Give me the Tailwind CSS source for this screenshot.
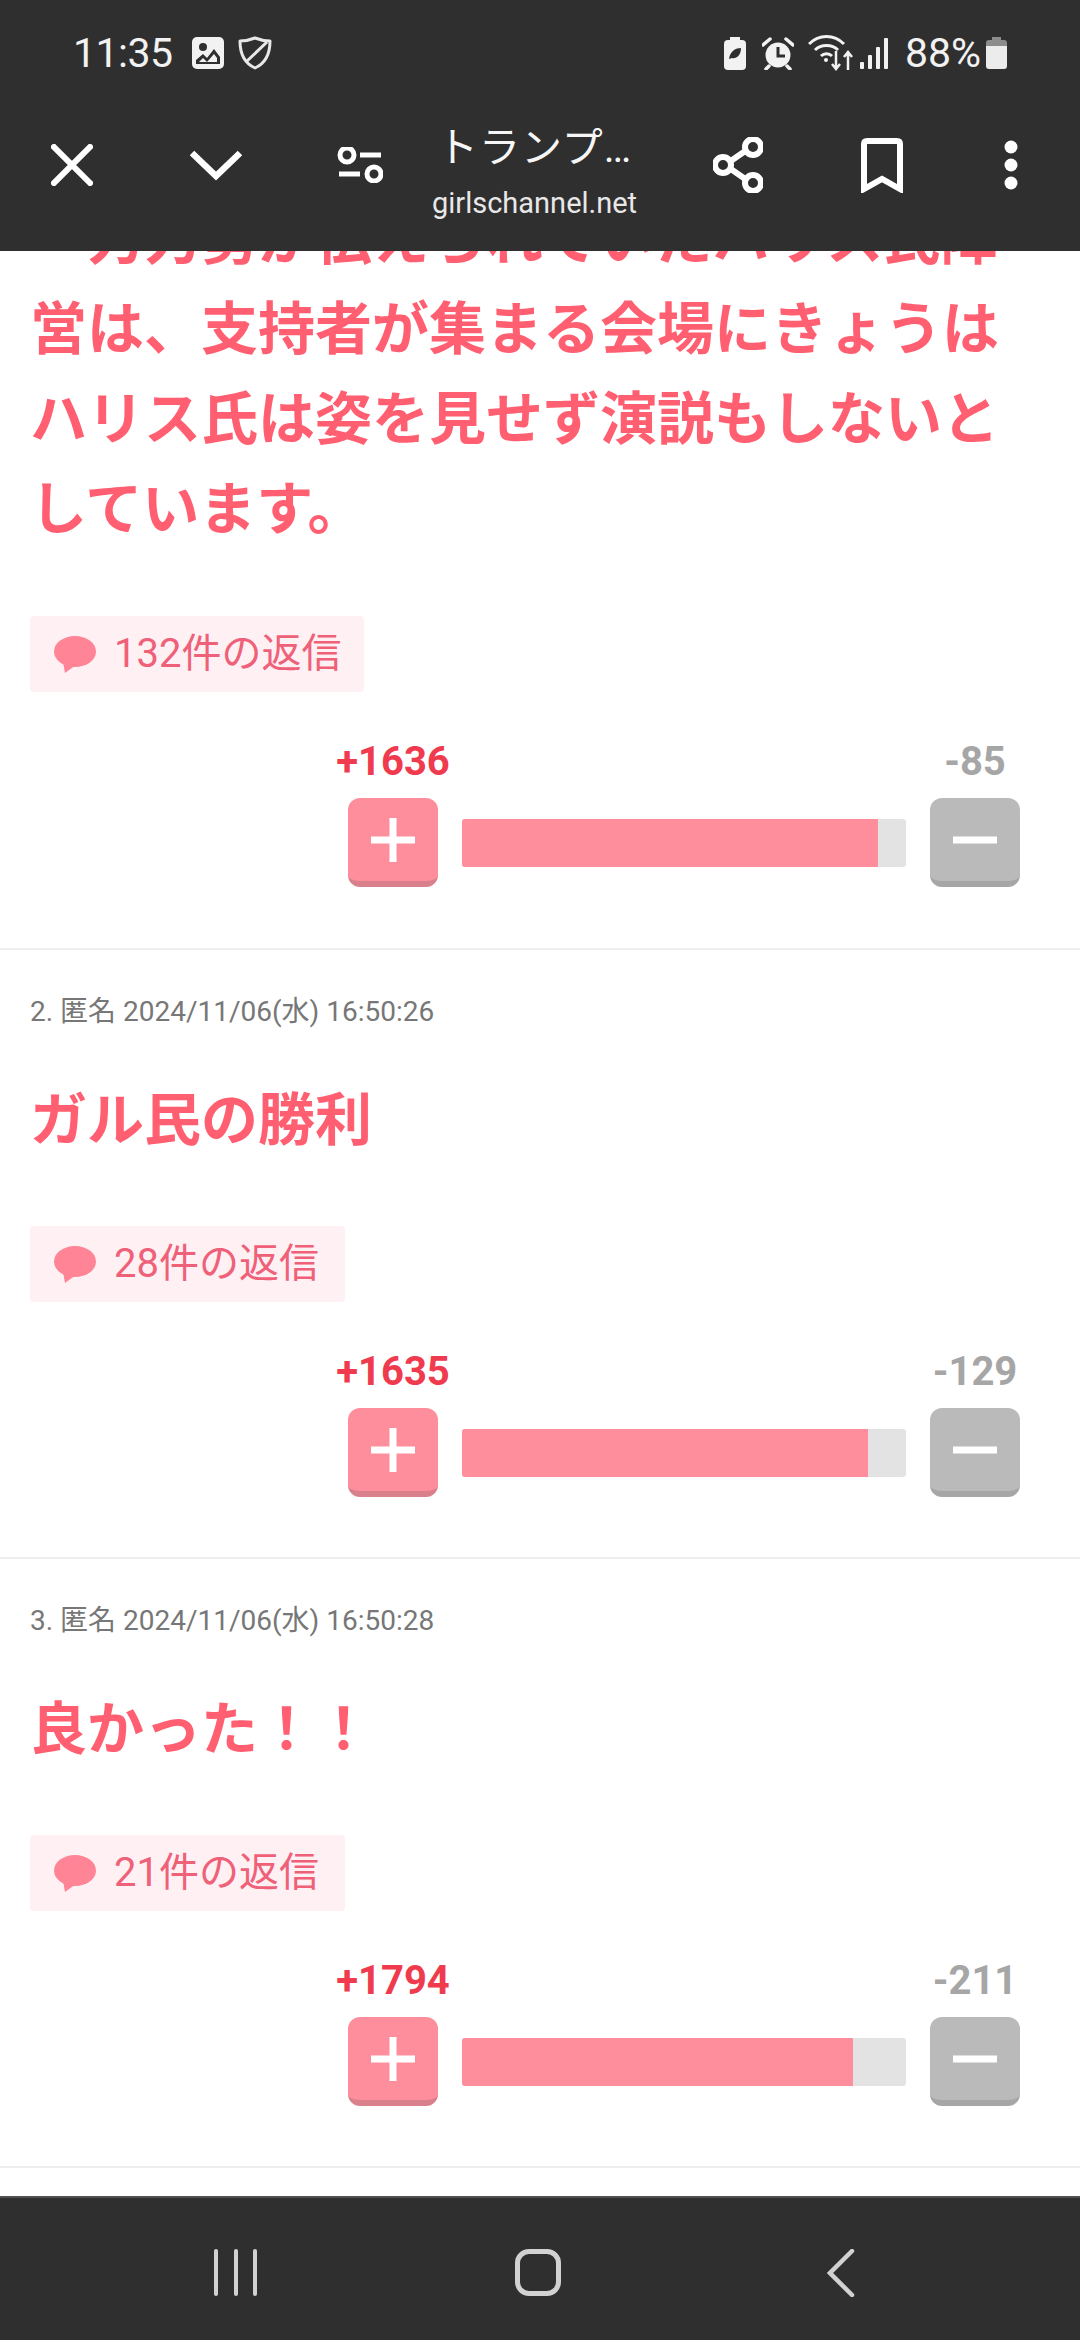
<!DOCTYPE html>
<html lang="ja">
<head>
<meta charset="utf-8">
<script src="https://cdn.jsdelivr.net/npm/@tailwindcss/browser@4"></script>
</head>
<body class="m-0">
<div class="w-[1080px] h-[2340px] flex flex-col overflow-hidden bg-white font-['Roboto','Noto_Sans_CJK_JP',sans-serif]">

  <header class="h-[251px] shrink-0 bg-[#2f2f2f] text-white relative z-10">
    <div class="h-[106px] flex items-center pl-[73px] pr-[73px]">
      <span class="text-[41px] leading-none tracking-[-0.5px] text-[#f2f2f2]">11:35</span>
      <svg class="ml-[19px]" width="32" height="32" viewBox="0 0 32 32"><rect width="32" height="32" rx="5" fill="#f2f2f2"/><circle cx="11" cy="10" r="4" fill="#2f2f2f"/><path d="M4 27 L4 23 L11 17 L15 21 L22 12 L28 20 L28 27 Z" fill="#2f2f2f"/><path d="M7 25 L11 21 L15 25 L22 17 L25 21 L25 25 Z" fill="#f2f2f2"/></svg>
      <svg class="ml-[14px]" width="34" height="34" viewBox="0 0 34 34" fill="none" stroke="#e8e8e8" stroke-width="3"><path d="M17 2 C22 4 27 5 32 5 C32 18 28 27 17 32 C6 27 2 18 2 5 C7 5 12 4 17 2 Z" stroke-linejoin="round"/><path d="M8 26 L29 6"/></svg>
      <div class="ml-auto flex items-center">
        <svg width="22" height="33" viewBox="0 0 22 33"><rect x="6" y="0" width="10" height="4" fill="#f2f2f2"/><rect y="3" width="22" height="30" rx="4" fill="#f2f2f2"/><path d="M5 22 C6 14 12 11 17 11 C17 19 12 22 8 21 Z" fill="#2f2f2f"/></svg>
        <svg class="ml-[16px]" width="32" height="33" viewBox="0 0 32 33"><circle cx="16" cy="18" r="12.5" fill="#f2f2f2"/><path d="M1 8 L8 2 M31 8 L24 2 M7 29 L4 32 M25 29 L28 32" stroke="#f2f2f2" stroke-width="3.5" stroke-linecap="round"/><path d="M16 10 V19 H23" fill="none" stroke="#2f2f2f" stroke-width="3"/></svg>
        <svg class="ml-[14px]" width="46" height="36" viewBox="0 0 46 36" fill="none" stroke="#f2f2f2" stroke-width="3"><path d="M1 9 C11 -1 26 -1 36 9"/><path d="M7 15 C13 9 24 9 30 15"/><path d="M13 21 C16 18 21 18 24 21"/><circle cx="18" cy="25" r="2" fill="#f2f2f2" stroke="none"/><path d="M28 16 V33 M24 29 L28 34 L32 29" stroke-width="2.5"/><path d="M40 35 V18 M36 22 L40 17 L44 22" stroke-width="2.5"/></svg>
        <svg class="ml-[6px]" width="29" height="32" viewBox="0 0 29 32" fill="#f2f2f2"><rect x="0" y="25" width="4" height="7" rx="1"/><rect x="8" y="18" width="4" height="14" rx="1" /><rect x="16" y="10" width="4" height="22" rx="1"/><rect x="24" y="1" width="4" height="31" rx="1"/></svg>
        <span class="ml-[16px] text-[41px] leading-none text-[#f2f2f2]">88%</span>
        <svg class="ml-[5px]" width="21" height="32" viewBox="0 0 21 32"><path d="M6 0 H15 V3 H18 Q21 3 21 6 V9 H0 V6 Q0 3 3 3 H6 Z" fill="#8c8c8c"/><path d="M0 9 H21 V29 Q21 32 18 32 H3 Q0 32 0 29 Z" fill="#ececec"/></svg>
      </div>
    </div>
    <div class="h-[118px] flex items-center">
      <button class="w-[144px] flex justify-center"><svg width="42" height="42" viewBox="0 0 42 42" stroke="#fff" stroke-width="6" stroke-linecap="square"><path d="M3 3 L39 39 M39 3 L3 39"/></svg></button>
      <button class="w-[144px] flex justify-center"><svg width="52" height="32" viewBox="0 0 52 32" fill="none" stroke="#fff" stroke-width="6.5"><path d="M2 4 L26 27 L50 4"/></svg></button>
      <button class="w-[144px] flex justify-center"><svg width="46" height="36" viewBox="0 0 46 36" fill="none" stroke="#fff" stroke-width="5"><circle cx="10" cy="8" r="7"/><path d="M23 8 H44"/><path d="M2 27 H23"/><circle cx="37" cy="27" r="7"/></svg></button>
      <div class="w-[234px] mt-[12px]">
        <div class="text-[41px] leading-[56px] pl-[5px] tracking-[1px] text-[#f6f6f6] whitespace-nowrap">トランプ…</div>
        <div class="text-[29px] leading-[40px] mt-[7px] text-[#e8e8e8] whitespace-nowrap">girlschannel.net</div>
      </div>
      <button class="w-[144px] flex justify-center"><svg width="50" height="56" viewBox="0 0 50 56" fill="none" stroke="#fff" stroke-width="6"><path d="M38 10 L12 28 L38 46"/><circle cx="40" cy="10" r="8" fill="#2f2f2f"/><circle cx="10" cy="28" r="8" fill="#2f2f2f"/><circle cx="40" cy="46" r="8" fill="#2f2f2f"/></svg></button>
      <button class="w-[144px] flex justify-center"><svg width="42" height="55" viewBox="0 0 42 55" fill="none" stroke="#fff" stroke-width="6"><path d="M3 51 V6 Q3 3 6 3 H36 Q39 3 39 6 V51 L21 41 Z"/></svg></button>
      <button class="w-[114px] flex justify-center"><svg width="14" height="50" viewBox="0 0 14 50" fill="#fff"><circle cx="7" cy="7" r="6.5"/><circle cx="7" cy="25" r="6.5"/><circle cx="7" cy="43" r="6.5"/></svg></button>
    </div>
  </header>

  <main class="flex-1 overflow-hidden">
    <article class="mt-[-56px] border-b-2 border-[#eeeeee] pb-[61px] px-[30px]">
      <p class="w-[1000px] text-[57px] leading-[90px] font-bold text-[#ff5f70]">　力力勢が伝えられていたハリス氏陣営は、支持者が集まる会場にきょうはハリス氏は姿を見せず演説もしないとしています。</p>
      <div class="mt-[61px] inline-flex items-center h-[76px] pl-[24px] pr-[23px] rounded-[4px] bg-[#fff0f3] text-[#ef6079] text-[40px] leading-none">
        <svg class="mr-[18px]" width="42" height="37" viewBox="0 0 42 37" fill="#ff8596"><ellipse cx="21" cy="15.5" rx="21" ry="15.5"/><path d="M9 26 L11 37 L22 29 Z"/></svg>132件の返信
      </div>
      <div class="mt-[50px] ml-auto mr-[30px] w-[672px]">
        <div class="flex justify-between text-[40px] leading-[40px] font-bold">
          <span class="w-[90px] flex justify-center whitespace-nowrap text-[#f03a4e]">+1636</span>
          <span class="w-[90px] flex justify-center whitespace-nowrap text-[#a6a6a6]">-85</span>
        </div>
        <div class="mt-[16px] flex items-start">
          <button class="w-[90px] h-[89px] rounded-[12px] bg-[#ff8e9c] border-b-[6px] border-[#d9808c] flex items-center justify-center"><svg width="44" height="44" viewBox="0 0 44 44" fill="#fff"><rect x="18.500" width="7" height="44"/><rect y="18.500" width="44" height="7"/></svg></button>
          <div class="mt-[21px] mx-[24px] flex-1 h-[48px] rounded-[3px] overflow-hidden bg-[#e3e3e3]"><div class="h-full w-[416px] bg-[#ff8e9c]"></div></div>
          <button class="w-[90px] h-[89px] rounded-[12px] bg-[#bababa] border-b-[6px] border-[#a6a6a6] flex items-center justify-center"><svg width="44" height="44" viewBox="0 0 44 44" fill="#fff"><rect y="18.500" width="44" height="7"/></svg></button>
        </div>
      </div>
    </article>

    <article class="border-b-2 border-[#eeeeee] pt-[43px] pb-[60px] px-[30px]">
      <div class="text-[28px] leading-[38px] text-[#777777]">2. 匿名 2024/11/06(水) 16:50:26</div>
      <p class="mt-[45px] text-[57px] leading-[90px] font-bold text-[#ff5f70]">ガル民の勝利</p>
      <div class="mt-[60px] inline-flex items-center h-[76px] pl-[24px] pr-[26px] rounded-[4px] bg-[#fff0f3] text-[#ef6079] text-[40px] leading-none">
        <svg class="mr-[18px]" width="42" height="37" viewBox="0 0 42 37" fill="#ff8596"><ellipse cx="21" cy="15.5" rx="21" ry="15.5"/><path d="M9 26 L11 37 L22 29 Z"/></svg>28件の返信
      </div>
      <div class="mt-[50px] ml-auto mr-[30px] w-[672px]">
        <div class="flex justify-between text-[40px] leading-[40px] font-bold">
          <span class="w-[90px] flex justify-center whitespace-nowrap text-[#f03a4e]">+1635</span>
          <span class="w-[90px] flex justify-center whitespace-nowrap text-[#a6a6a6]">-129</span>
        </div>
        <div class="mt-[16px] flex items-start">
          <button class="w-[90px] h-[89px] rounded-[12px] bg-[#ff8e9c] border-b-[6px] border-[#d9808c] flex items-center justify-center"><svg width="44" height="44" viewBox="0 0 44 44" fill="#fff"><rect x="18.500" width="7" height="44"/><rect y="18.500" width="44" height="7"/></svg></button>
          <div class="mt-[21px] mx-[24px] flex-1 h-[48px] rounded-[3px] overflow-hidden bg-[#e3e3e3]"><div class="h-full w-[406px] bg-[#ff8e9c]"></div></div>
          <button class="w-[90px] h-[89px] rounded-[12px] bg-[#bababa] border-b-[6px] border-[#a6a6a6] flex items-center justify-center"><svg width="44" height="44" viewBox="0 0 44 44" fill="#fff"><rect y="18.500" width="44" height="7"/></svg></button>
        </div>
      </div>
    </article>

    <article class="border-b-2 border-[#eeeeee] pt-[43px] pb-[60px] px-[30px]">
      <div class="text-[28px] leading-[38px] text-[#777777]">3. 匿名 2024/11/06(水) 16:50:28</div>
      <p class="mt-[45px] text-[57px] leading-[90px] font-bold text-[#ff5f70]">良かった！！</p>
      <div class="mt-[60px] inline-flex items-center h-[76px] pl-[24px] pr-[26px] rounded-[4px] bg-[#fff0f3] text-[#ef6079] text-[40px] leading-none">
        <svg class="mr-[18px]" width="42" height="37" viewBox="0 0 42 37" fill="#ff8596"><ellipse cx="21" cy="15.5" rx="21" ry="15.5"/><path d="M9 26 L11 37 L22 29 Z"/></svg>21件の返信
      </div>
      <div class="mt-[50px] ml-auto mr-[30px] w-[672px]">
        <div class="flex justify-between text-[40px] leading-[40px] font-bold">
          <span class="w-[90px] flex justify-center whitespace-nowrap text-[#f03a4e]">+1794</span>
          <span class="w-[90px] flex justify-center whitespace-nowrap text-[#a6a6a6]">-211</span>
        </div>
        <div class="mt-[16px] flex items-start">
          <button class="w-[90px] h-[89px] rounded-[12px] bg-[#ff8e9c] border-b-[6px] border-[#d9808c] flex items-center justify-center"><svg width="44" height="44" viewBox="0 0 44 44" fill="#fff"><rect x="18.500" width="7" height="44"/><rect y="18.500" width="44" height="7"/></svg></button>
          <div class="mt-[21px] mx-[24px] flex-1 h-[48px] rounded-[3px] overflow-hidden bg-[#e3e3e3]"><div class="h-full w-[391px] bg-[#ff8e9c]"></div></div>
          <button class="w-[90px] h-[89px] rounded-[12px] bg-[#bababa] border-b-[6px] border-[#a6a6a6] flex items-center justify-center"><svg width="44" height="44" viewBox="0 0 44 44" fill="#fff"><rect y="18.500" width="44" height="7"/></svg></button>
        </div>
      </div>
    </article>
  </main>

  <footer class="h-[144px] shrink-0 bg-[#2f2f2f] border-t-2 border-[#505050] flex items-start pt-[51px]">
    <div class="ml-[214px] flex gap-[15.500px]"><span class="w-[4px] h-[47px] rounded-full bg-[#d2d2d2]"></span><span class="w-[4px] h-[47px] rounded-full bg-[#d2d2d2]"></span><span class="w-[4px] h-[47px] rounded-full bg-[#d2d2d2]"></span></div>
    <div class="ml-[258px] w-[46px] h-[47px] rounded-[14px] border-[5px] border-[#d2d2d2]"></div>
    <svg class="ml-[266px]" width="28" height="48" viewBox="0 0 28 48" fill="none" stroke="#d2d2d2" stroke-width="4.500" stroke-linecap="round"><path d="M25 2 L3 24 L25 46" /></svg>
  </footer>
</div>
</body>
</html>
